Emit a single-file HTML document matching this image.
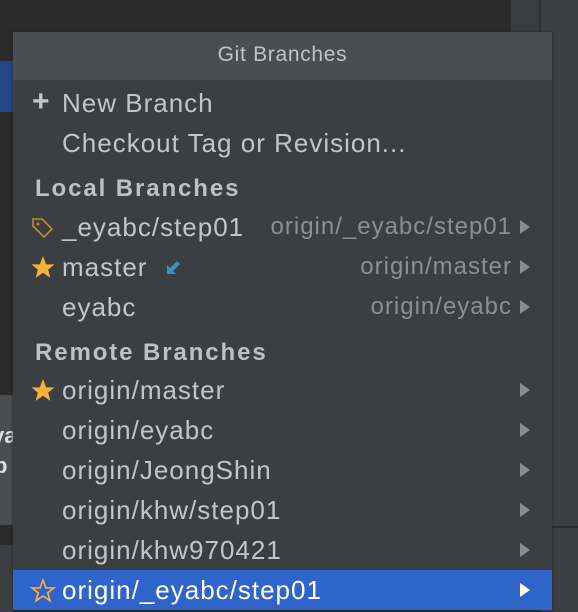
<!DOCTYPE html>
<html><head><style>
body{margin:0;width:578px;height:612px;background:#2b2b2b;position:relative;overflow:hidden;font-family:"Liberation Sans",sans-serif}
.a{position:absolute}
.pop{left:13px;top:32px;width:539px;height:578px;background:#3c3f41;box-shadow:0 0 3px #222}
.hdr{left:0;top:0;width:539px;height:48px;background:#4a4d51;color:#c3c3c3;font-size:21px;letter-spacing:0.7px;text-align:center;line-height:46px}
.row{left:0;width:539px;height:40px;line-height:40px;color:#c5c5c5;font-size:26px;letter-spacing:1px;white-space:nowrap}
.row span.t{position:absolute;left:49px}
.row .r{position:absolute;right:40px;color:#8e8e8e;font-size:24px;letter-spacing:1px}
.sec{font-weight:bold;color:#c0c0c0;font-size:24px;letter-spacing:1.9px;left:22px}
.tri{position:absolute;left:507px;top:13px;width:0;height:0;border-left:10px solid #8c8c8c;border-top:7px solid transparent;border-bottom:7px solid transparent}
.sel{background:#2f65ca;color:#fff}
.sel .tri{border-left-color:#fff}
svg{position:absolute}
</style></head><body>
<div class="a" style="left:511px;top:0;width:28px;height:32px;background:#3a3d3f"></div>
<div class="a" style="left:539px;top:0;width:2px;height:612px;background:#2e3032"></div>
<div class="a" style="left:541px;top:0;width:37px;height:612px;background:#3c3f41"></div>
<div class="a" style="left:552px;top:526px;width:26px;height:2px;background:#2b2b2b"></div>
<div class="a" style="left:0;top:61px;width:13px;height:51px;background:#27468a"></div>
<div class="a" style="left:0;top:395px;width:13px;height:130px;background:#4b4e51;color:#ddd;font-weight:bold;font-size:22px;overflow:hidden"><div style="position:absolute;left:-8px;top:28px">va</div><div style="position:absolute;left:-6px;top:58px">b</div></div>
<div class="a" style="left:0;top:545px;width:13px;height:67px;background:#3c3f41"></div>
<div class="a pop">
<div class="a hdr">Git Branches</div>
<div class="a row" style="top:51px"><span style="position:absolute;left:19px;top:-1px;font-size:30px;font-weight:bold;color:#c5c5c5">+</span><span class="t">New Branch</span></div>
<div class="a row" style="top:91px"><span class="t">Checkout Tag or Revision...</span></div>
<div class="a row sec" style="top:137px">Local Branches</div>
<div class="a row" style="top:175px">
<svg style="left:18px;top:10px" width="24" height="22" viewBox="0 0 24 22"><path d="M2 2 H11 L21 12 L13 20 L2 9 Z" fill="none" stroke="#c28a30" stroke-width="1.6"/><circle cx="7" cy="7" r="1.5" fill="#c28a30"/></svg>
<span class="t">_eyabc/step01</span><span class="r">origin/_eyabc/step01</span><div class="tri"></div></div>
<div class="a row" style="top:215px">
<svg style="left:17px;top:8px" width="26" height="25" viewBox="0 0 24 24"><path d="M12 1 L15 9 L23 9 L17 14 L19 22 L12 17 L5 22 L7 14 L1 9 L9 9 Z" fill="#f4b13a"/></svg>
<span class="t">master</span>
<svg style="left:152px;top:13px" width="16" height="16" viewBox="0 0 16 16"><path d="M2 14 V5 L5 8 L12 1 L15 4 L8 11 L11 14 Z" fill="#3592c4"/></svg>
<span class="r">origin/master</span><div class="tri"></div></div>
<div class="a row" style="top:255px"><span class="t">eyabc</span><span class="r">origin/eyabc</span><div class="tri"></div></div>
<div class="a row sec" style="top:301px">Remote Branches</div>
<div class="a row" style="top:338px">
<svg style="left:17px;top:8px" width="26" height="25" viewBox="0 0 24 24"><path d="M12 1 L15 9 L23 9 L17 14 L19 22 L12 17 L5 22 L7 14 L1 9 L9 9 Z" fill="#f4b13a"/></svg>
<span class="t">origin/master</span><div class="tri"></div></div>
<div class="a row" style="top:378px"><span class="t">origin/eyabc</span><div class="tri"></div></div>
<div class="a row" style="top:418px"><span class="t">origin/JeongShin</span><div class="tri"></div></div>
<div class="a row" style="top:458px"><span class="t">origin/khw/step01</span><div class="tri"></div></div>
<div class="a row" style="top:498px"><span class="t">origin/khw970421</span><div class="tri"></div></div>
<div class="a row sel" style="top:538px">
<svg style="left:17px;top:8px" width="26" height="25" viewBox="0 0 24 24"><path d="M12 2 L14.8 9.5 L22.5 9.5 L16.5 14.2 L18.7 21.8 L12 17.3 L5.3 21.8 L7.5 14.2 L1.5 9.5 L9.2 9.5 Z" fill="none" stroke="#f4b13a" stroke-width="1.6"/></svg>
<span class="t">origin/_eyabc/step01</span><div class="tri"></div></div>
</div>
</body></html>
